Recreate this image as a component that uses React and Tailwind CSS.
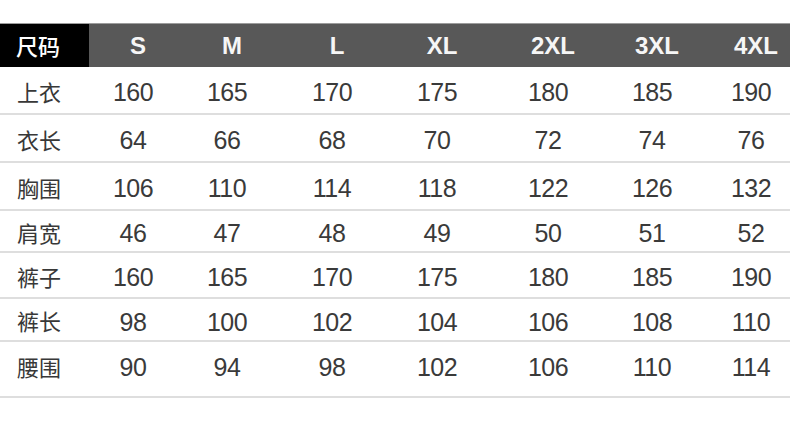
const COLUMNS = [
  { label: "S", width: "w-[98px]", head: "", body: "pr-[10px]" },
  { label: "M", width: "w-[90px]", head: "", body: "pr-[10px]" },
  { label: "L", width: "w-[120px]", head: "", body: "pr-[10px]" },
  { label: "XL", width: "w-[90px]", head: "", body: "pr-[10px]" },
  { label: "2XL", width: "w-[132px]", head: "", body: "pr-[10px]" },
  { label: "3XL", width: "w-[76px]", head: "", body: "pr-[10px]" },
  { label: "4XL", width: "w-[95px]", head: "pl-[27px]", body: "pl-[27px] pr-[10px]" },
];

const ROWS = [
  { name: "上衣", values: [160, 165, 170, 175, 180, 185, 190], h: "h-[48px]" },
  { name: "衣长", values: [64, 66, 68, 70, 72, 74, 76], h: "h-[48px]" },
  { name: "胸围", values: [106, 110, 114, 118, 122, 126, 132], h: "h-[48px]" },
  { name: "肩宽", values: [46, 47, 48, 49, 50, 51, 52], h: "h-[42px]" },
  { name: "裤子", values: [160, 165, 170, 175, 180, 185, 190], h: "h-[46px]" },
  { name: "裤长", values: [98, 100, 102, 104, 106, 108, 110], h: "h-[43px]" },
  { name: "腰围", values: [90, 94, 98, 102, 106, 110, 114], h: "h-[56px] pb-[8px]" },
];

const cjk = "font-['Noto_Sans_CJK_SC',sans-serif]";
const num = "font-['Liberation_Sans','Noto_Sans_CJK_SC',sans-serif]";

export default function App() {
  return (
    <div className="h-[431px] w-[790px] overflow-hidden bg-white pt-[23px]">
      <div className="flex h-[44px] border-t border-[#9c9c9c] bg-[#585858]">
        <div className={`flex w-[89px] items-center bg-black pl-[16px] text-[22px] font-medium text-white ${cjk}`}>
          尺码
        </div>
        {COLUMNS.map((c) => (
          <div
            key={c.label}
            className={`flex items-center justify-center text-[24px] font-bold text-[#f6f6f6] ${c.width} ${c.head} ${num}`}
          >
            {c.label}
          </div>
        ))}
      </div>
      {ROWS.map((r) => (
        <div key={r.name} className={`flex border-b-2 border-[#dedede] ${r.h}`}>
          <div className={`flex w-[89px] items-center pl-[17px] pt-[2px] text-[22px] text-[#383838] ${cjk}`}>
            {r.name}
          </div>
          {r.values.map((v, i) => (
            <div
              key={i}
              className={`flex items-center justify-center pt-[6px] text-[25px] tracking-[-0.5px] text-[#3a3a3a] ${COLUMNS[i].width} ${COLUMNS[i].body} ${num}`}
            >
              {v}
            </div>
          ))}
        </div>
      ))}
    </div>
  );
}
